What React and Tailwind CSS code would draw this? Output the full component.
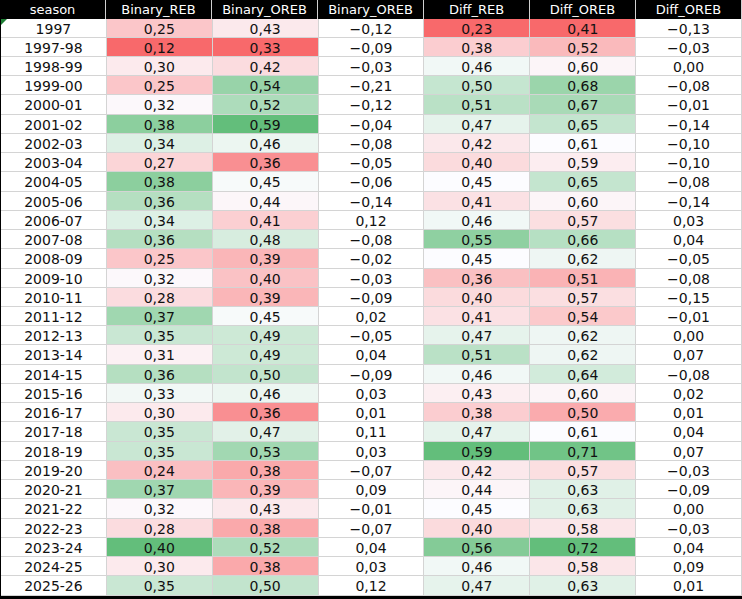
const headers = ['season', 'Binary_REB', 'Binary_OREB', 'Binary_OREB', 'Diff_REB', 'Diff_OREB', 'Diff_OREB'];

const rows = [
  ['1997', 0.25, 0.43, -0.12, 0.23, 0.41, -0.13],
  ['1997-98', 0.12, 0.33, -0.09, 0.38, 0.52, -0.03],
  ['1998-99', 0.30, 0.42, -0.03, 0.46, 0.60, 0.00],
  ['1999-00', 0.25, 0.54, -0.21, 0.50, 0.68, -0.08],
  ['2000-01', 0.32, 0.52, -0.12, 0.51, 0.67, -0.01],
  ['2001-02', 0.38, 0.59, -0.04, 0.47, 0.65, -0.14],
  ['2002-03', 0.34, 0.46, -0.08, 0.42, 0.61, -0.10],
  ['2003-04', 0.27, 0.36, -0.05, 0.40, 0.59, -0.10],
  ['2004-05', 0.38, 0.45, -0.06, 0.45, 0.65, -0.08],
  ['2005-06', 0.36, 0.44, -0.14, 0.41, 0.60, -0.14],
  ['2006-07', 0.34, 0.41, 0.12, 0.46, 0.57, 0.03],
  ['2007-08', 0.36, 0.48, -0.08, 0.55, 0.66, 0.04],
  ['2008-09', 0.25, 0.39, -0.02, 0.45, 0.62, -0.05],
  ['2009-10', 0.32, 0.40, -0.03, 0.36, 0.51, -0.08],
  ['2010-11', 0.28, 0.39, -0.09, 0.40, 0.57, -0.15],
  ['2011-12', 0.37, 0.45, 0.02, 0.41, 0.54, -0.01],
  ['2012-13', 0.35, 0.49, -0.05, 0.47, 0.62, 0.00],
  ['2013-14', 0.31, 0.49, 0.04, 0.51, 0.62, 0.07],
  ['2014-15', 0.36, 0.50, -0.09, 0.46, 0.64, -0.08],
  ['2015-16', 0.33, 0.46, 0.03, 0.43, 0.60, 0.02],
  ['2016-17', 0.30, 0.36, 0.01, 0.38, 0.50, 0.01],
  ['2017-18', 0.35, 0.47, 0.11, 0.47, 0.61, 0.04],
  ['2018-19', 0.35, 0.53, 0.03, 0.59, 0.71, 0.07],
  ['2019-20', 0.24, 0.38, -0.07, 0.42, 0.57, -0.03],
  ['2020-21', 0.37, 0.39, 0.09, 0.44, 0.63, -0.09],
  ['2021-22', 0.32, 0.43, -0.01, 0.45, 0.63, 0.00],
  ['2022-23', 0.28, 0.38, -0.07, 0.40, 0.58, -0.03],
  ['2023-24', 0.40, 0.52, 0.04, 0.56, 0.72, 0.04],
  ['2024-25', 0.30, 0.38, 0.03, 0.46, 0.58, 0.09],
  ['2025-26', 0.35, 0.50, 0.12, 0.47, 0.63, 0.01],
];

// columns that carry the red-white-green scale
const scaled = [1, 2, 4, 5];

const RED = [248, 105, 107];
const MID = [252, 252, 255];
const GREEN = [99, 190, 123];

const mix = (a, b, t) => a.map((v, i) => Math.round(v + (b[i] - v) * t));

const stats = {};
scaled.forEach((c) => {
  const vals = rows.map((r) => r[c]).sort((a, b) => a - b);
  const n = vals.length;
  const median = n % 2 ? vals[(n - 1) / 2] : (vals[n / 2 - 1] + vals[n / 2]) / 2;
  stats[c] = { min: vals[0], max: vals[n - 1], median };
});

const colorFor = (c, v) => {
  const s = stats[c];
  let rgb;
  if (v <= s.median) {
    rgb = mix(MID, RED, s.median === s.min ? 0 : (s.median - v) / (s.median - s.min));
  } else {
    rgb = mix(MID, GREEN, (v - s.median) / (s.max - s.median));
  }
  return `rgb(${rgb.join(',')})`;
};

const fmt = (v) => v.toFixed(2).replace('.', ',').replace('-', '−');

const rowHeight = (i) => Math.floor(((i + 1) * 577) / 30) - Math.floor((i * 577) / 30);

export default function App() {
  return (
    <div
      className="w-[742px] h-[599px] overflow-hidden bg-white text-[14px] text-[#111]"
      style={{ fontFamily: '"DejaVu Sans", sans-serif' }}
    >
      <div className="grid grid-cols-7 h-[19px] bg-black text-white text-[13px]">
        {headers.map((h, i) => (
          <div key={i} className="flex items-center justify-center border-r border-[#d0d0d0] leading-none">
            {h}
          </div>
        ))}
      </div>
      <div className="relative flex flex-col h-[577px] border-l border-black">
        <svg className="absolute left-0 top-0" width="6" height="6" viewBox="0 0 6 6">
          <polygon points="0,0 6,0 0,6" fill="#1e7e34" />
        </svg>
        {rows.map((r, ri) => (
          <div
            key={r[0]}
            className={`grid grid-cols-7 border-b border-[#d4d4d4] ${rowHeight(ri) === 20 ? 'h-[20px]' : 'h-[19px]'}`}
          >
            {r.map((v, ci) => (
              <div
                key={ci}
                className="flex items-center justify-center border-r border-[#d4d4d4] leading-none pt-px"
                style={scaled.includes(ci) ? { backgroundColor: colorFor(ci, v) } : undefined}
              >
                {ci === 0 ? v : fmt(v)}
              </div>
            ))}
          </div>
        ))}
      </div>
      <div className="h-[3px] bg-black" />
    </div>
  );
}
